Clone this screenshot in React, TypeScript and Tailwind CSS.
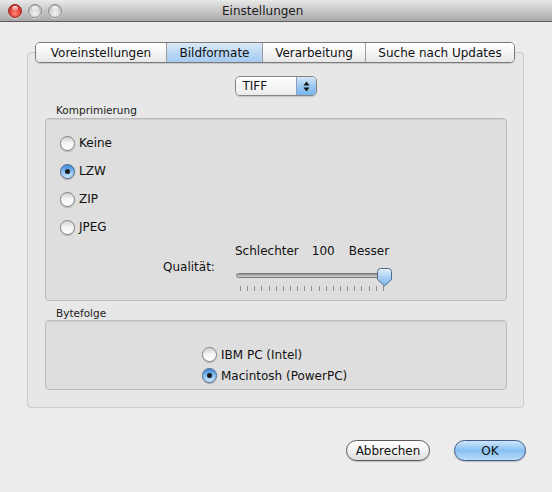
import React from "react";

function Light({ kind }: { kind: "red" | "gray" }) {
  return kind === "red" ? (
    <div className="relative h-[14px] w-[14px] rounded-full border border-[#9b2a22] bg-[radial-gradient(circle_at_50%_70%,#ff8a7c_0%,#e6463b_45%,#b3221a_100%)] shadow-[0_1px_0_rgba(255,255,255,0.5)]">
      <div className="absolute left-[3px] top-[1px] h-[5px] w-[6px] rounded-full bg-[linear-gradient(to_bottom,rgba(255,255,255,0.9),rgba(255,255,255,0.1))]" />
    </div>
  ) : (
    <div className="relative h-[14px] w-[14px] rounded-full border border-[#8c8c8c] bg-[radial-gradient(circle_at_50%_70%,#f4f4f4_0%,#d2d2d2_50%,#a9a9a9_100%)] shadow-[0_1px_0_rgba(255,255,255,0.5)]">
      <div className="absolute left-[3px] top-[1px] h-[5px] w-[6px] rounded-full bg-[linear-gradient(to_bottom,rgba(255,255,255,0.9),rgba(255,255,255,0.1))]" />
    </div>
  );
}

function Radio({ checked }: { checked?: boolean }) {
  return checked ? (
    <div className="flex h-[15px] w-[15px] shrink-0 items-center justify-center rounded-full border border-[#4c6a93] bg-[linear-gradient(to_bottom,#3d86d8_0%,#8fc2f1_55%,#cfe8fc_100%)] shadow-[0_1px_1px_rgba(0,0,0,0.25)]">
      <div className="h-[5px] w-[5px] rounded-full bg-[#1b1b1b]" />
    </div>
  ) : (
    <div className="h-[15px] w-[15px] shrink-0 rounded-full border border-[#858585] bg-[linear-gradient(to_bottom,#cfcfcf_0%,#f4f4f4_45%,#ffffff_100%)] shadow-[0_1px_1px_rgba(0,0,0,0.2)]" />
  );
}

const tabs = [
  { label: "Voreinstellungen", w: "w-[130px]" },
  { label: "Bildformate", w: "w-[96px]", active: true },
  { label: "Verarbeitung", w: "w-[103px]" },
  { label: "Suche nach Updates", w: "w-[149px]" },
];

export default function App() {
  return (
    <div className="flex h-[492px] w-[552px] flex-col overflow-hidden bg-[#ececec] font-['DejaVu_Sans',sans-serif] text-[12px] text-[#111]">
      {/* title bar */}
      <div className="flex h-[22px] shrink-0 items-center border-b border-[#5f5f5f] bg-linear-to-b from-[#e9e9e9] to-[#a8a8a8] pl-[8px]">
        <div className="flex items-center gap-[6px]">
          <Light kind="red" />
          <Light kind="gray" />
          <Light kind="gray" />
        </div>
        <div className="ml-[160px] text-[12px] leading-none text-[#1a1a1a]">Einstellungen</div>
      </div>

      {/* tabs */}
      <div className="relative z-10 ml-[35px] mt-[20px] -mb-[11px] flex h-[21px] w-fit overflow-hidden rounded-[5px] border border-[#7a7a7a] shadow-[0_1px_1px_rgba(0,0,0,0.15)]">
        {tabs.map((t, i) => (
          <div
            key={t.label}
            className={`${t.w} flex items-center justify-center leading-none ${i > 0 ? "border-l border-[#9c9c9c]" : ""} ${
              t.active
                ? "bg-linear-to-b from-[#dbeaf8] via-[#bcd8f4] to-[#a6cbf0]"
                : "bg-linear-to-b from-[#ffffff] via-[#f6f6f6] to-[#e6e6e6]"
            }`}
          >
            {t.label}
          </div>
        ))}
      </div>

      {/* tab panel */}
      <div className="ml-[27px] flex h-[356px] w-[497px] flex-col rounded-[4px] border border-[#cbcbcb] bg-[#e7e7e7] pt-[23px]">
        {/* popup button */}
        <div className="mx-auto flex h-[20px] w-[82px] overflow-hidden rounded-[5px] border border-[#848484] shadow-[0_1px_1px_rgba(0,0,0,0.15)]">
          <div className="flex flex-1 items-center bg-linear-to-b from-[#ffffff] to-[#ececec] pl-[7px] leading-none">TIFF</div>
          <div className="flex w-[20px] items-center justify-center border-l border-[#8a9fbb] bg-linear-to-b from-[#d6e8f9] via-[#9cc9f1] to-[#77b5ee]">
            <svg width="7" height="11" viewBox="0 0 7 11">
              <path d="M3.5 0.5 L6.5 4.5 H0.5 Z" fill="#111" />
              <path d="M3.5 10.5 L6.5 6.5 H0.5 Z" fill="#111" />
            </svg>
          </div>
        </div>

        {/* Komprimierung */}
        <div className="ml-[28px] mt-[8px] h-[12px] text-[10.5px] leading-[12px] text-[#222]">Komprimierung</div>
        <div className="ml-[17px] mt-[2px] flex h-[183px] w-[462px] flex-col rounded-[4px] border border-[#bcbcbc] bg-[#dedede] pl-[14px] pt-[10px] shadow-[inset_0_1px_1px_rgba(0,0,0,0.08)]">
          {[
            { l: "Keine" },
            { l: "LZW", c: true },
            { l: "ZIP" },
            { l: "JPEG" },
          ].map((r) => (
            <div key={r.l} className="flex h-[28px] items-center gap-[4px]">
              <Radio checked={r.c} />
              <span className="leading-none">{r.l}</span>
            </div>
          ))}

          {/* quality slider */}
          <div className="ml-[103px] mt-[2px] flex">
            <div className="w-[72px] pt-[17px] leading-[15px]">Qualität:</div>
            <div className="flex w-[156px] flex-col">
              <div className="flex h-[15px] items-center leading-none">
                <span>Schlechter</span>
                <span className="ml-[13px]">100</span>
                <span className="ml-[14px]">Besser</span>
              </div>
              <div className="relative mt-[10px] h-[18px]">
                <div className="ml-[1px] mt-[5px] h-[5px] w-[152px] rounded-full border border-[#7c7c7c] bg-linear-to-b from-[#8e8e8e] to-[#d8d8d8]" />
                <svg className="absolute left-[142px] top-0" width="15" height="19" viewBox="0 0 15 19">
                  <defs>
                    <linearGradient id="knob" x1="0" y1="0" x2="0" y2="1">
                      <stop offset="0" stopColor="#e4f1fc" />
                      <stop offset="0.5" stopColor="#a9d0f4" />
                      <stop offset="1" stopColor="#78b3ea" />
                    </linearGradient>
                  </defs>
                  <path
                    d="M3.5 0.5 H11.5 Q14.5 0.5 14.5 3.5 V11.5 L7.5 18 L0.5 11.5 V3.5 Q0.5 0.5 3.5 0.5 Z"
                    fill="url(#knob)"
                    stroke="#52698a"
                    strokeWidth="1"
                  />
                </svg>
              </div>
              <div className="ml-[5px] flex h-[5px] w-[144px] justify-between">
                {Array.from({ length: 21 }).map((_, i) => (
                  <div key={i} className="h-[5px] w-px bg-[#8e8e8e]" />
                ))}
              </div>
            </div>
          </div>
        </div>

        {/* Bytefolge */}
        <div className="ml-[28px] mt-[6px] h-[12px] text-[10.5px] leading-[12px] text-[#222]">Bytefolge</div>
        <div className="ml-[17px] mt-[1px] flex h-[70px] w-[462px] flex-col rounded-[4px] border border-[#bcbcbc] bg-[#dedede] pl-[156px] pt-[23px] shadow-[inset_0_1px_1px_rgba(0,0,0,0.08)]">
          <div className="flex h-[21px] items-center gap-[4px]">
            <Radio />
            <span className="leading-none">IBM PC (Intel)</span>
          </div>
          <div className="flex h-[21px] items-center gap-[4px]">
            <Radio checked />
            <span className="leading-none">Macintosh (PowerPC)</span>
          </div>
        </div>
      </div>

      {/* buttons */}
      <div className="mr-[26px] mt-[32px] flex justify-end gap-[24px]">
        <div className="flex h-[21px] w-[84px] items-center justify-center rounded-full border border-[#5c5c5c] bg-linear-to-b from-[#ffffff] via-[#f3f3f3] to-[#dcdcdc] leading-none shadow-[0_1px_1px_rgba(0,0,0,0.2)]">
          Abbrechen
        </div>
        <div className="flex h-[21px] w-[72px] items-center justify-center rounded-full border border-[#3f5b86] bg-linear-to-b from-[#cfe6fb] via-[#86c0f1] to-[#b9dcf9] leading-none shadow-[0_1px_1px_rgba(0,0,0,0.2)]">
          OK
        </div>
      </div>
    </div>
  );
}
